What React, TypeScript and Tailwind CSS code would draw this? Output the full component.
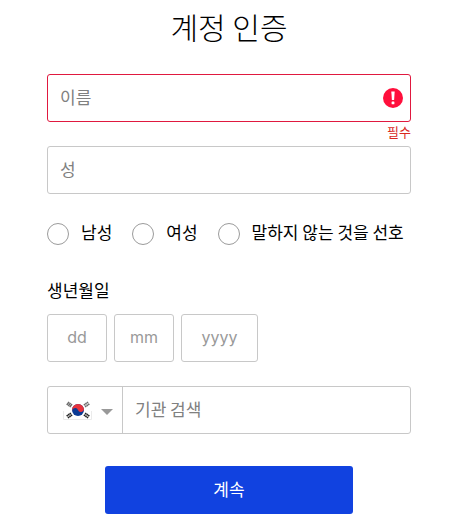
import React from 'react';
import clsx from 'clsx';

const fieldBase =
  'h-12 rounded-[3px] border bg-white pb-[3px] text-black placeholder:opacity-100 focus:outline-none';

const genders = [
  { id: 'male', label: '남성' },
  { id: 'female', label: '여성' },
  { id: 'unspecified', label: '말하지 않는 것을 선호' },
];

const birthFields = [
  { id: 'day', label: '일', placeholder: 'dd', width: 'w-[60px]' },
  { id: 'month', label: '월', placeholder: 'mm', width: 'w-[60px]' },
  { id: 'year', label: '년', placeholder: 'yyyy', width: 'w-[77px]' },
];

function ErrorIcon() {
  return (
    <svg className="absolute right-2 top-[14px] h-5 w-5" viewBox="0 0 20 20" aria-hidden="true">
      <circle cx="10" cy="10" r="10" fill="#ff0f3c" />
      <path d="M8.3 3.4h3.4l-.6 8.6H8.9z" fill="#fff" />
      <rect x="8.6" y="13.6" width="2.8" height="2.6" rx=".5" fill="#fff" />
    </svg>
  );
}

function KoreaFlag() {
  return (
    <svg className="h-5 w-[29px]" viewBox="0 0 29 20" aria-hidden="true">
      <path d="M.5 11v8.5h28V11" fill="none" stroke="#ebebeb" />
      <circle cx="15" cy="10" r="6" fill="#0b3a94" />
      <path
        d="M9.4 12.2A6 6 0 1 1 20.6 7.8A3 3 0 0 1 15 10A3 3 0 0 0 9.4 12.2z"
        fill="#e8323c"
      />
      {/* trigrams */}
      <g fill="none" strokeWidth="1.5">
        <g stroke="#6b6b6b">
          <path d="M3.8 5L6 1.8M5.3 6.1L7.5 2.9M6.8 7.2L9 4" />
          <path d="M26.2 5L24 1.8M24.7 6.1L22.5 2.9M23.2 7.2L21 4" strokeDasharray="1.7 .5" />
        </g>
        <g stroke="#222">
          <path d="M3.8 15L6 18.2M5.3 13.9L7.5 17.1M6.8 12.8L9 16" strokeDasharray="1.7 .5" />
          <path d="M26.2 15L24 18.2M24.7 13.9L22.5 17.1M23.2 12.8L21 16" strokeDasharray="1.7 .5" />
        </g>
      </g>
    </svg>
  );
}

export default function App() {
  return (
    <main className="min-h-screen bg-white pb-3 pl-[47px] pr-[58px] pt-[6px] font-['Noto_Sans_CJK_KR',sans-serif] text-[17px] text-black">
      <h1 className="text-center text-[30px] font-light leading-10">계정 인증</h1>

      <form className="mt-7" noValidate>
        <div className="relative">
          <input
            type="text"
            placeholder="이름"
            aria-label="이름"
            aria-invalid="true"
            aria-describedby="first-name-error"
            className={clsx(fieldBase, 'block w-full border-[#e0193f] pl-3 pr-10 placeholder:text-[#808080]')}
          />
          <ErrorIcon />
        </div>
        <p id="first-name-error" className="h-6 text-right text-[13px] leading-5 text-[#d9281e]">
          필수
        </p>

        <input
          type="text"
          placeholder="성"
          aria-label="성"
          className={clsx(fieldBase, 'block w-full border-[#c8c8c8] px-3 placeholder:text-[#808080]')}
        />

        <fieldset className="mt-7 flex gap-5 whitespace-nowrap">
          {genders.map((g) => (
            <label key={g.id} htmlFor={g.id} className="flex items-start gap-3 leading-5">
              <input
                type="radio"
                id={g.id}
                name="gender"
                className="mt-px h-[22px] w-[22px] appearance-none rounded-full border border-[#9b9b9b] checked:border-[6px] checked:border-[#1142e0]"
              />
              {g.label}
            </label>
          ))}
        </fieldset>

        <fieldset className="mt-[33px]">
          <legend className="leading-6">생년월일</legend>
          <div className="mt-3 flex gap-[7px]">
            {birthFields.map((f) => (
              <input
                key={f.id}
                type="text"
                inputMode="numeric"
                placeholder={f.placeholder}
                aria-label={f.label}
                className={clsx(
                  fieldBase,
                  f.width,
                  "border-[#c8c8c8] text-center font-['Inter',sans-serif] text-base placeholder:text-[#999]"
                )}
              />
            ))}
          </div>
        </fieldset>

        <div className="mt-6 flex h-12 rounded-[3px] border border-[#c8c8c8]">
          <div className="relative flex w-[75px] items-center gap-[9px] border-r border-[#c8c8c8] pl-[15px]">
            <KoreaFlag />
            <svg className="mt-[3px] h-[6px] w-3" viewBox="0 0 12 6" aria-hidden="true">
              <path d="M0 0h12L6 6z" fill="#999" />
            </svg>
            <select aria-label="국가" className="absolute inset-0 w-full cursor-pointer opacity-0">
              <option>대한민국</option>
            </select>
          </div>
          <input
            type="search"
            placeholder="기관 검색"
            aria-label="기관 검색"
            className="min-w-0 flex-1 px-3 pb-[3px] placeholder:text-[#808080] placeholder:opacity-100 focus:outline-none"
          />
        </div>

        <button
          type="submit"
          className="mx-auto mt-8 block h-12 w-[68%] rounded-[3px] bg-[#1142e0] pb-[2px] text-white hover:bg-[#0d36bb]"
        >
          계속
        </button>
      </form>
    </main>
  );
}
